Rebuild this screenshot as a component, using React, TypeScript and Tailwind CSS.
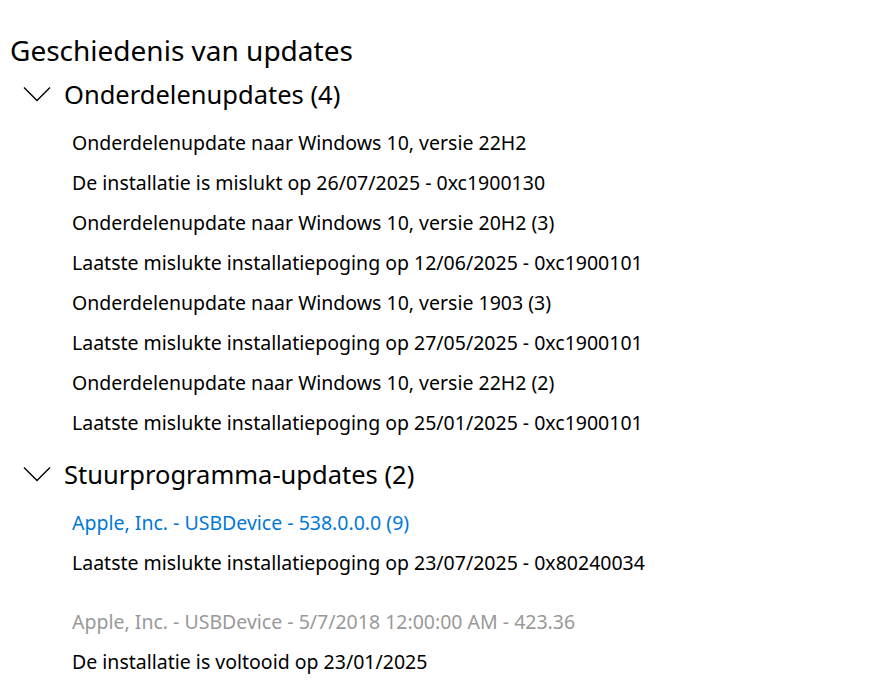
export default function App() {
  const feature = [
    'Onderdelenupdate naar Windows 10, versie 22H2',
    'De installatie is mislukt op 26/07/2025 - 0xc1900130',
    'Onderdelenupdate naar Windows 10, versie 20H2 (3)',
    'Laatste mislukte installatiepoging op 12/06/2025 - 0xc1900101',
    'Onderdelenupdate naar Windows 10, versie 1903 (3)',
    'Laatste mislukte installatiepoging op 27/05/2025 - 0xc1900101',
    'Onderdelenupdate naar Windows 10, versie 22H2 (2)',
    'Laatste mislukte installatiepoging op 25/01/2025 - 0xc1900101',
  ];

  const Chevron = () => (
    <svg width="28" height="16" viewBox="0 0 28 16" fill="none" className="shrink-0">
      <path d="M1 1.5 L14 14.5 L27 1.5" stroke="#000" strokeWidth="1.4" />
    </svg>
  );

  return (
    <div className="h-[688px] w-[886px] overflow-hidden bg-white text-black" style={{ fontFamily: '"Noto Sans", "Open Sans", sans-serif' }}>
      <h1 className="pl-[10px] pt-[32px] text-[28px] leading-[36px]">Geschiedenis van updates</h1>
      <div className="mt-[10px] flex items-center gap-[13px] pl-[23px] text-[25.5px] leading-[32px]">
        <Chevron />
        <span>Onderdelenupdates (4)</span>
      </div>
      <div className="mt-[13px] flex flex-col pl-[72px] text-[19.5px]">
        {feature.map((t) => (
          <div key={t} className="h-[40px] leading-[40px]">{t}</div>
        ))}
      </div>
      <div className="mt-[15px] flex items-center gap-[13px] pl-[23px] text-[25.5px] leading-[32px]">
        <Chevron />
        <span>Stuurprogramma-updates (2)</span>
      </div>
      <div className="mt-[13px] flex flex-col pl-[72px] text-[19.5px]">
        <div className="h-[40px] leading-[40px] text-[#0078d7]">Apple, Inc. - USBDevice - 538.0.0.0 (9)</div>
        <div className="h-[40px] leading-[40px]">Laatste mislukte installatiepoging op 23/07/2025 - 0x80240034</div>
        <div className="mt-[19px] h-[40px] leading-[40px] text-[#999999]">Apple, Inc. - USBDevice - 5/7/2018 12:00:00 AM - 423.36</div>
        <div className="h-[40px] leading-[40px]">De installatie is voltooid op 23/01/2025</div>
      </div>
    </div>
  );
}
